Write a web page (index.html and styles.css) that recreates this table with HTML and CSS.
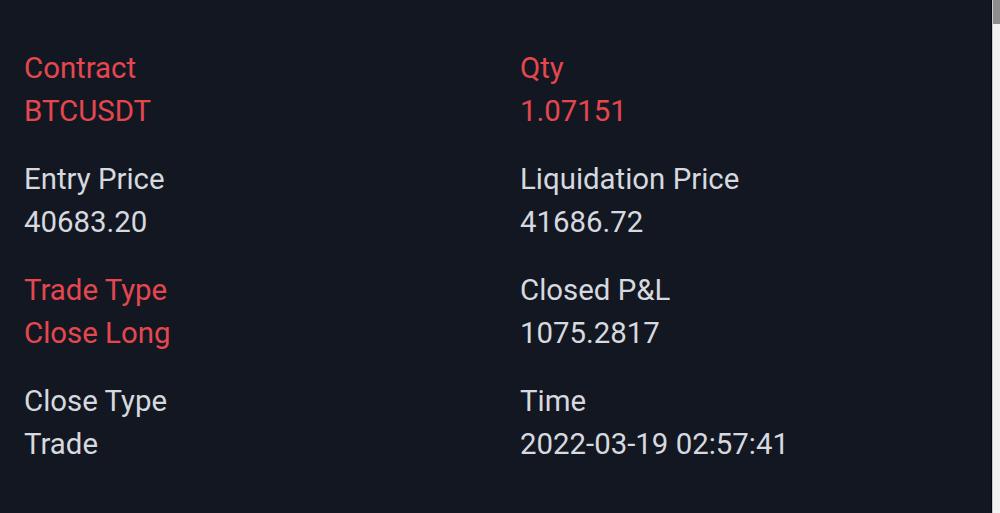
FILE: index.html
```html
<!DOCTYPE html>
<html>
<head>
<meta charset="utf-8">
<link rel="stylesheet" href="styles.css">
</head>
<body>
<div class="page">
  <main class="panel">
    <div class="grid">
      <div class="field red"><div class="label">Contract</div><div class="value">BTCUSDT</div></div>
      <div class="field red"><div class="label">Qty</div><div class="value">1.07151</div></div>
      <div class="field"><div class="label">Entry Price</div><div class="value">40683.20</div></div>
      <div class="field"><div class="label">Liquidation Price</div><div class="value">41686.72</div></div>
      <div class="field red"><div class="label">Trade Type</div><div class="value">Close Long</div></div>
      <div class="field"><div class="label">Closed P&amp;L</div><div class="value">1075.2817</div></div>
      <div class="field"><div class="label">Close Type</div><div class="value">Trade</div></div>
      <div class="field"><div class="label">Time</div><div class="value">2022-03-19 02:57:41</div></div>
    </div>
  </main>
  <div class="scrollbar"><div class="thumb"></div></div>
</div>
</body>
</html>
```

FILE: styles.css
```css
html, body {
  margin: 0;
  padding: 0;
  height: 100%;
  overflow: hidden;
}
body {
  background: #131722;
  font-family: Roboto, "Liberation Sans", sans-serif;
}
.page {
  display: flex;
  height: 513px;
}
.panel {
  flex: 1;
  background: #131722;
  border-right: 1px solid #05070b;
  padding: 47px 0 0 24px;
}
.grid {
  display: grid;
  grid-template-columns: 496px 1fr;
  row-gap: 25px;
}
.field {
  color: #d6d9df;
  font-size: 29.4px;
  line-height: 43px;
}
.field.red {
  color: #e5474f;
}
.scrollbar {
  width: 7px;
  background: #f1f1f1;
  border-left: 1px solid #c9c9c9;
}
.thumb {
  height: 24px;
  background: #8d8d8d;
}
```
